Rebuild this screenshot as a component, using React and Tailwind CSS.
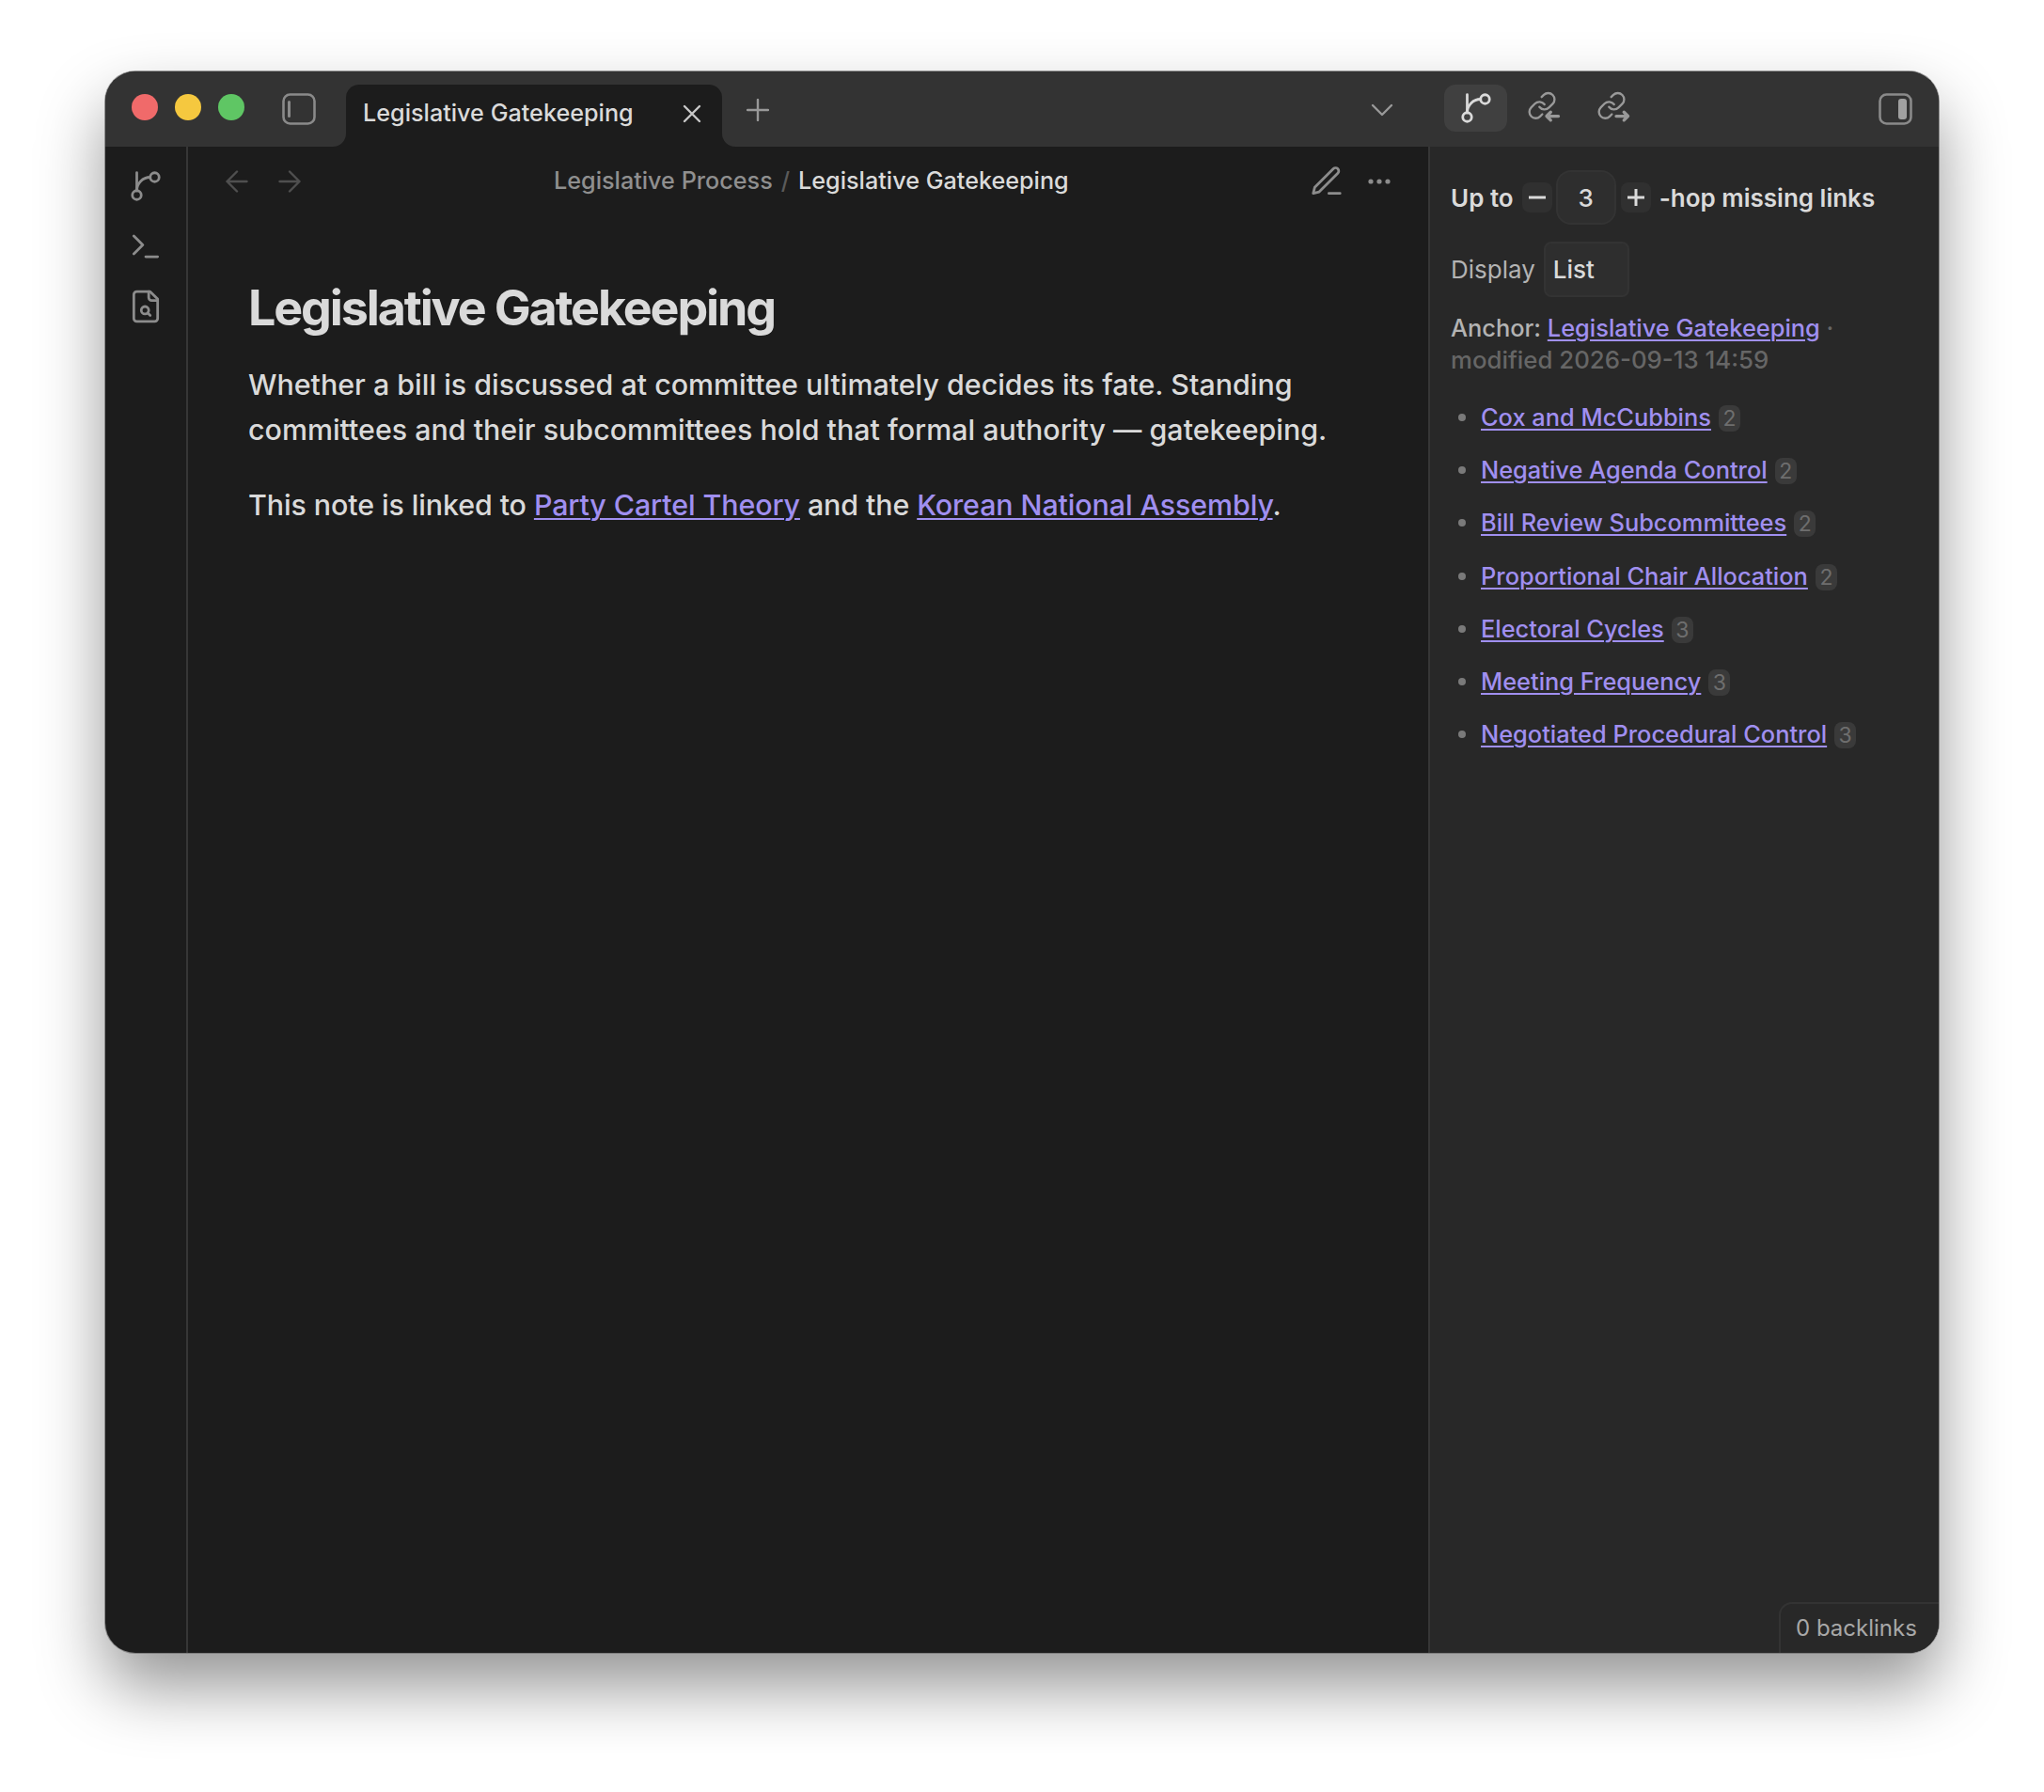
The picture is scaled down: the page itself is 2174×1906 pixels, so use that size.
import React from "react";

const Ic = ({ size = 38, sw = 1.75, className = "", children }) => (
  <svg width={size} height={size} viewBox="0 0 24 24" fill="none" stroke="currentColor" strokeWidth={sw} strokeLinecap="round" strokeLinejoin="round" className={className}>
    {children}
  </svg>
);

const Branch = (p) => (
  <Ic {...p}>
    <path d="M6 3v12" />
    <circle cx="18" cy="6" r="3" />
    <circle cx="6" cy="18" r="3" />
    <path d="M15 6a9 9 0 0 0-9 9" />
  </Ic>
);

const LinkPaths = () => (
  <g transform="translate(.55 .13) scale(.85)">
    <path d="M10 13a5 5 0 0 0 7.54.54l3-3a5 5 0 0 0-7.07-7.07l-1.72 1.71" />
    <path d="M14 11a5 5 0 0 0-7.54-.54l-3 3a5 5 0 0 0 7.07 7.07l1.71-1.71" />
  </g>
);

const items = [
  ["Cox and McCubbins", 2],
  ["Negative Agenda Control", 2],
  ["Bill Review Subcommittees", 2],
  ["Proportional Chair Allocation", 2],
  ["Electoral Cycles", 3],
  ["Meeting Frequency", 3],
  ["Negotiated Procedural Control", 3],
];

const link = "text-[#a08ff0] underline decoration-2 underline-offset-[3px]";

export default function App() {
  return (
    <div className="w-[2174px] h-[1906px] bg-white pt-[76px] pl-[112px] overflow-hidden [font-family:Inter,sans-serif] antialiased">
      <div className="relative w-[1950px] h-[1682px] rounded-[32px] overflow-hidden flex flex-col bg-[#1c1c1c] shadow-[0_0_0_1px_rgba(110,110,110,0.7),0_36px_70px_rgba(0,0,0,0.42)]">
        {/* title bar */}
        <div className="h-[80px] shrink-0 bg-[#333333] flex items-start relative">
          <div className="flex items-center gap-[18px] ml-[28px] mt-[24px]">
            <span className="w-[28px] h-[28px] rounded-full bg-[#f06a6a]" />
            <span className="w-[28px] h-[28px] rounded-full bg-[#f5c83f]" />
            <span className="w-[28px] h-[28px] rounded-full bg-[#5fc664]" />
          </div>
          <svg width="36" height="34" viewBox="0 0 36 34" fill="none" className="ml-[40px] mt-[23px] text-[#8a8a8a]">
            <rect x="1.5" y="1.5" width="33" height="31" rx="7" stroke="currentColor" strokeWidth="2.6" />
            <rect x="6" y="8" width="3" height="18" rx="1.5" fill="currentColor" />
          </svg>
          {/* tab */}
          <div className="relative ml-[32px] mt-[14px] w-[400px] h-[66px] bg-[#1c1c1c] rounded-t-[14px] flex items-center pl-[18px] pb-[4px]">
            <span className="absolute -left-[14px] bottom-0 w-[14px] h-[14px] bg-[#1c1c1c]">
              <span className="block w-full h-full bg-[#333333] rounded-br-[14px]" />
            </span>
            <span className="absolute -right-[14px] bottom-0 w-[14px] h-[14px] bg-[#1c1c1c]">
              <span className="block w-full h-full bg-[#333333] rounded-bl-[14px]" />
            </span>
            <span className="text-[25.2px] font-[450] leading-none text-[#dadada] whitespace-nowrap">Legislative Gatekeeping</span>
            <svg width="20" height="20" viewBox="0 0 20 20" className="absolute right-[22px] top-[21px] text-[#c8c8c8]" stroke="currentColor" strokeWidth="2.4" strokeLinecap="round">
              <path d="M2 2l16 16M18 2L2 18" />
            </svg>
          </div>
          <svg width="24" height="24" viewBox="0 0 24 24" className="ml-[26px] mt-[29px] text-[#999999]" stroke="currentColor" strokeWidth="2.4" strokeLinecap="round">
            <path d="M12 1v22M1 12h22" />
          </svg>
          <svg width="24" height="14" viewBox="0 0 24 14" fill="none" className="ml-[640px] mt-[34px] text-[#999999]" stroke="currentColor" strokeWidth="2.4" strokeLinecap="round" strokeLinejoin="round">
            <path d="M2 2l10 10L22 2" />
          </svg>
          <div className="ml-[54px] mt-[14px] w-[67px] h-[50px] rounded-[12px] bg-[#404040] flex items-center justify-center text-[#dadada]">
            <Branch />
          </div>
          <div className="ml-[2px] mt-[14px] w-[74px] h-[50px] flex items-center justify-center text-[#999999]">
            <Ic>
              <LinkPaths />
              <path d="M21.8 17.4h-7.9M16.6 14.7l-2.7 2.7 2.7 2.7" strokeWidth="2.1" />
            </Ic>
          </div>
          <div className="w-[74px] mt-[14px] h-[50px] flex items-center justify-center text-[#999999]">
            <Ic>
              <LinkPaths />
              <path d="M13.9 17.4h7.9M19.1 14.7l2.7 2.7-2.7 2.7" strokeWidth="2.1" />
            </Ic>
          </div>
          <svg width="36" height="34" viewBox="0 0 36 34" fill="none" className="ml-[245px] mt-[23px] text-[#8a8a8a]">
            <rect x="1.5" y="1.5" width="33" height="31" rx="7" stroke="currentColor" strokeWidth="2.6" />
            <rect x="21" y="6" width="9" height="22" rx="3" fill="#a0a0a0" />
          </svg>
        </div>

        {/* body */}
        <div className="flex-1 flex min-h-0">
          {/* ribbon */}
          <div className="w-[88px] shrink-0 border-r-2 border-[#363636] flex flex-col items-center gap-[26px] pt-[23px] text-[#8c8c8c]">
            <Branch />
            <Ic>
              <path d="M4 17l6-6-6-6" />
              <path d="M12 19h8" />
            </Ic>
            <Ic>
              <path d="M15 2H6a2 2 0 0 0-2 2v16a2 2 0 0 0 2 2h12a2 2 0 0 0 2-2V7Z" />
              <path d="M14 2v4a2 2 0 0 0 2 2h4" />
              <circle cx="11.5" cy="14.5" r="2.5" />
              <path d="M13.3 16.3 15 18" />
            </Ic>
          </div>

          {/* main */}
          <div className="w-[1319px] shrink-0 flex flex-col">
            <div className="h-[74px] flex items-center relative text-[#4f4f4f]">
              <div className="flex ml-[34px] gap-[20px]">
                <Ic size={36} sw={1.6}>
                  <path d="M19 12H5M12 19l-7-7 7-7" />
                </Ic>
                <Ic size={36} sw={1.6}>
                  <path d="M5 12h14M12 5l7 7-7 7" />
                </Ic>
              </div>
              <div className="absolute left-[389px] top-0 h-[74px] flex items-center text-[25.2px] font-[450] whitespace-nowrap">
                <span className="text-[#8f8f8f]">Legislative Process</span>
                <span className="text-[#5a5a5a] mx-[9px]">/</span>
                <span className="text-[#dadada]">Legislative Gatekeeping</span>
              </div>
              <div className="ml-auto mr-[40px] flex items-center gap-[25px] text-[#8c8c8c]">
                <Ic>
                  <path d="M13.5 20H21" />
                  <path d="M16.5 3.5a2.12 2.12 0 0 1 3 3L7 19l-4 1 1-4Z" />
                </Ic>
                <svg width="24" height="6" viewBox="0 0 24 6" fill="currentColor">
                  <circle cx="3" cy="3" r="2.6" />
                  <circle cx="12" cy="3" r="2.6" />
                  <circle cx="21" cy="3" r="2.6" />
                </svg>
              </div>
            </div>
            <div className="pl-[64px] pr-[40px] pt-[66px]">
              <h1 className="text-[52px] leading-[64px] font-bold tracking-[-2.14px] text-[#dadada] m-0">Legislative Gatekeeping</h1>
              <p className="text-[30.4px] font-[450] leading-[48px] text-[#dadada] mt-[25px]">
                Whether a bill is discussed at committee ultimately decides its fate. Standing committees and their subcommittees hold that formal authority — gatekeeping.
              </p>
              <p className="text-[30.4px] font-[450] tracking-[-0.1px] leading-[48px] text-[#dadada] mt-[32px]">
                This note is linked to <a className={link}>Party Cartel Theory</a> and the <a className={link}>Korean National Assembly</a>.
              </p>
            </div>
          </div>

          {/* right pane */}
          <div className="flex-1 min-w-0 bg-[#282828] border-l-2 border-[#363636] pl-[22px] pt-[25px]">
            <div className="h-[58px] flex items-center text-[26px] font-semibold text-[#dadada] whitespace-nowrap">
              <span>Up to</span>
              <span className="ml-[9px] w-[32px] h-[32px] rounded-[8px] bg-[#303030] flex items-center justify-center">
                <svg width="18" height="4" viewBox="0 0 18 4"><rect width="18" height="3" y=".5" fill="currentColor" /></svg>
              </span>
              <span className="ml-[4px] w-[64px] h-[58px] rounded-[16px] bg-[#2e2e2e] border-2 border-[#333333] flex items-center justify-center font-medium">3</span>
              <span className="ml-[5px] w-[32px] h-[32px] rounded-[8px] bg-[#303030] flex items-center justify-center">
                <svg width="18" height="18" viewBox="0 0 18 18"><path d="M9 0v18M0 9h18" stroke="currentColor" strokeWidth="3" /></svg>
              </span>
              <span className="ml-[9px]">-hop missing links</span>
            </div>
            <div className="h-[59px] mt-[18px] flex items-center text-[26px] text-[#b3b3b3]">
              <span>Display</span>
              <span className="ml-[9px] w-[91px] h-[59px] rounded-[8px] bg-[#2e2e2e] border-2 border-[#333333] flex items-center pl-[8px] text-[#dadada] font-medium">List</span>
            </div>
            <div className="mt-[16px] text-[25.4px] font-[450] leading-[34px] text-[#b3b3b3]">
              Anchor: <a className={link}>Legislative Gatekeeping</a> <span className="text-[#666666]">·</span>
              <br />
              <span className="text-[#666666] text-[25.8px]">modified 2026-09-13 14:59</span>
            </div>
            <ul className="mt-[27px] flex flex-col gap-[22.2px]">
              {items.map(([t, n]) => (
                <li key={t} className="h-[34px] flex items-center text-[25.4px] font-[450] leading-[34px] whitespace-nowrap">
                  <span className="w-[8px] h-[8px] rounded-full bg-[#7a7a7a] ml-[8px] mr-[16px]" />
                  <a className={link}>{t}</a>
                  <span className="ml-[8px] h-[28px] w-[23px] rounded-[8px] bg-[#3a3a3a] text-[23px] font-normal leading-[28px] text-[#6e6e6e] text-center mt-[2px]">{n}</span>
                </li>
              ))}
            </ul>
          </div>
        </div>

        {/* status bar */}
        <div className="absolute right-0 bottom-0 w-[170px] h-[54px] bg-[#282828] border-t-2 border-l-2 border-[#333333] rounded-tl-[14px] flex items-center pl-[16px] text-[24px] text-[#a8a8a8] whitespace-nowrap">
          0 backlinks
        </div>
      </div>
    </div>
  );
}
